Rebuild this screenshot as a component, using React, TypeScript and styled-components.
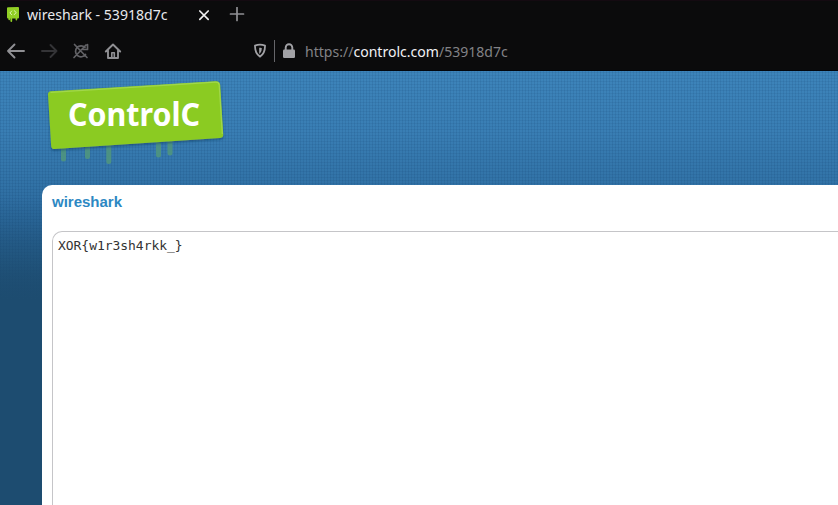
import React from "react";
import styled, { createGlobalStyle } from "styled-components";

const GlobalStyle = createGlobalStyle`
  html, body { margin: 0; padding: 0; background: #0b0b0c; overflow: hidden; }
  * { box-sizing: border-box; }
`;

const Window = styled.div`
  width: 838px;
  height: 505px;
  overflow: hidden;
  display: flex;
  flex-direction: column;
  font-family: "Noto Sans", sans-serif;
`;

const TabBar = styled.header`
  display: flex;
  align-items: center;
  height: 30px;
  flex: none;
  padding: 0 0 2px 5px;
  background: #0b0b0c;
  border-top: 1px solid #140a11;
`;

const TabTitle = styled.span`
  width: 170px;
  margin-left: 6px;
  font-size: 14.1px;
  line-height: 20px;
  color: #e9e9ec;
  white-space: nowrap;
`;

const NavBar = styled.nav`
  display: flex;
  align-items: center;
  height: 41px;
  flex: none;
  padding: 2px 0 0 5px;
  background: #0b0b0c;
  border-bottom: 1px solid #02050b;
`;

const Buttons = styled.div`
  display: flex;
  gap: 10px;
  width: 247px;
`;

const Icon = styled.svg<{ $color?: string }>`
  display: block;
  flex: none;
  color: ${(p) => p.$color ?? "#909094"};
  fill: none;
  stroke: currentColor;
  stroke-width: 1.9;
  stroke-linecap: round;
  stroke-linejoin: round;
`;

const NewTab = styled(Icon)`
  margin-left: 7px;
`;

const Divider = styled.span`
  width: 1px;
  height: 22px;
  margin: 0 7px 0 6px;
  background: #66666a;
`;

const Address = styled.span`
  margin-left: 9px;
  padding-top: 1px;
  font-size: 14.05px;
  line-height: 20px;
  color: #828286;
  white-space: nowrap;
`;

const Domain = styled.span`
  color: #f1f1f4;
`;

const Page = styled.main`
  flex: 1;
  min-height: 0;
  display: flex;
  flex-direction: column;
  padding-left: 42px;
  background:
    linear-gradient(transparent 125px, rgba(29, 76, 112, 0.45) 185px, #1d4c70 230px),
    repeating-linear-gradient(90deg, rgba(10, 50, 95, 0.11) 0 1px, transparent 1px 3px),
    repeating-linear-gradient(0deg, rgba(10, 50, 95, 0.09) 0 1px, transparent 1px 3px),
    linear-gradient(#3d84ba 0, #397eb4 60px, #3172a6 115px, #2b699c 150px, #1d4c70 240px);
`;

const LogoArea = styled.div`
  height: 114px;
  flex: none;
`;

const Logo = styled.svg`
  display: block;
`;

const Brand = styled.text`
  font-family: "Noto Sans", "Open Sans", sans-serif;
  font-weight: 700;
  font-size: 32px;
  fill: #fff;
`;

const Sheet = styled.section`
  flex: 1;
  min-height: 0;
  display: flex;
  flex-direction: column;
  padding: 8px 0 0 10px;
  background: #fff;
  border-top-left-radius: 10px;
`;

const Title = styled.h1`
  margin: 0 0 20px;
  font: bold 15px/18px "Liberation Sans", Arial, sans-serif;
  color: #2d88c3;
`;

const Paste = styled.pre`
  flex: 1;
  margin: 0;
  padding: 6px 5px;
  border: 1px solid #c5c5c8;
  border-width: 1px 0 0 1px;
  border-top-left-radius: 10px;
  font: 13px/16px "DejaVu Sans Mono", monospace;
  letter-spacing: -0.04px;
  color: #333;
`;

export default function App() {
  return (
    <>
      <GlobalStyle />
      <Window>
        <TabBar>
          <Icon width="16" height="18" viewBox="0 0 16 18">
            <path d="M3 1.3 13 1a1 1 0 0 1 1 1v9.500a1 1 0 0 1-1 1h-.8v1.200a.8.8 0 0 1-1.600 0v-1.200H7.200v2.500a.9.900 0 0 1-1.800 0v-2.500H5v1a.8.8 0 0 1-1.600 0v-1H3a1 1 0 0 1-1-1V2.300a1 1 0 0 1 1-1Z" fill="#91cf25" stroke="none" />
            <path d="M6.700 5 4.900 7l1.900 1.700M9.200 4.700l2 1.800-1.900 2.100" stroke="#e3f7bc" strokeWidth=".9" />
          </Icon>
          <TabTitle>wireshark - 53918d7c</TabTitle>
          <Icon width="14" height="14" viewBox="0 0 14 14" $color="#eeeeef">
            <path d="m2.800 3 8.400 8.400M11.200 3l-8.400 8.400" strokeWidth="1.7" />
          </Icon>
          <NewTab width="38" height="16" viewBox="0 0 38 16">
            <path d="M19 .5v13M12.500 7h13" strokeWidth="1.7" />
          </NewTab>
        </TabBar>

        <NavBar>
          <Buttons>
            <Icon width="22" height="20" viewBox="0 0 22 20">
              <path d="M19 10H3M9.500 3.500 3 10l6.500 6.500" />
            </Icon>
            <Icon width="22" height="20" viewBox="0 0 22 20" $color="#343437">
              <path d="M5 10h14.500M13.500 4l6 6-6 6" />
            </Icon>
            <Icon width="22" height="20" viewBox="0 0 22 20" $color="#626266">
              <path d="M16 6.500A5.500 5.500 0 1 0 16.500 13.500M18.500 3.500v5h-5M5.500 3.500l12.500 13M17 4 5 16.500" strokeWidth="1.700" />
            </Icon>
            <Icon width="22" height="20" viewBox="0 0 22 20">
              <path d="m4.800 10.500 7.200-7 7.200 7M7 9.500v7.500h10V9.500" />
              <path d="M10.800 16v-4.300h2.500V16" strokeWidth="1.600" />
            </Icon>
          </Buttons>
          <Icon width="16" height="18" viewBox="0 0 16 18" $color="#a2a2a6">
            <path d="M8 2.700c1.700 0 3.600.4 5 .9.100 5-.7 8.500-5 11-4.300-2.500-5.100-6-5-11 1.400-.5 3.300-.9 5-.9Z" strokeWidth="1.8" />
            <path d="M7.200 5.700c.8 0 2 .2 2.600.4-.1 2.800-.6 4.500-2.600 5.800V5.700Z" fill="currentColor" stroke="none" />
          </Icon>
          <Divider />
          <Icon width="14" height="18" viewBox="0 0 14 18" $color="#a2a2a6">
            <path d="M3.700 8V5.500a3.300 3.300 0 0 1 6.600 0V8" />
            <rect x="1" y="7.500" width="12" height="8.500" rx="1.200" fill="currentColor" stroke="none" />
          </Icon>
          <Address>
            https://<Domain>controlc.com</Domain>/53918d7c
          </Address>
        </NavBar>

        <Page>
          <LogoArea>
            <Logo width="190" height="106" viewBox="42 71 190 106">
              <defs>
                <filter id="shadow" x="-10%" y="-15%" width="120%" height="140%">
                  <feDropShadow dx="0" dy="1.5" stdDeviation="1.2" floodColor="#123c60" floodOpacity=".6" />
                </filter>
                <filter id="soften">
                  <feGaussianBlur stdDeviation=".6" />
                </filter>
              </defs>
              <path
                d="M63.500 146v13M87.500 145v11.500M108.800 143v18.500M158.500 141v14M170 140v13"
                stroke="#50957f"
                strokeWidth="5"
                strokeLinecap="round"
                opacity=".9"
                filter="url(#soften)"
              />
              <path d="M51 91.300 215.500 81.200q4.500-.2 4.700 3.800l3 49.600q.2 3.200-3 3.400L54.500 149q-3 .2-3.300-2.800L48 94.500Q47.900 91.500 51 91.300Z" fill="#8bcb23" filter="url(#shadow)" />
              <path d="M50.500 92.300 215.500 82.200q3.500-.1 3.700 2.800L222.300 134" fill="none" stroke="#a1d74b" strokeWidth="1.200" />
              <Brand x="68" y="126" textLength="132" lengthAdjust="spacingAndGlyphs">
                ControlC
              </Brand>
            </Logo>
          </LogoArea>
          <Sheet>
            <Title>wireshark</Title>
            <Paste>{"XOR{w1r3sh4rkk_}"}</Paste>
          </Sheet>
        </Page>
      </Window>
    </>
  );
}
